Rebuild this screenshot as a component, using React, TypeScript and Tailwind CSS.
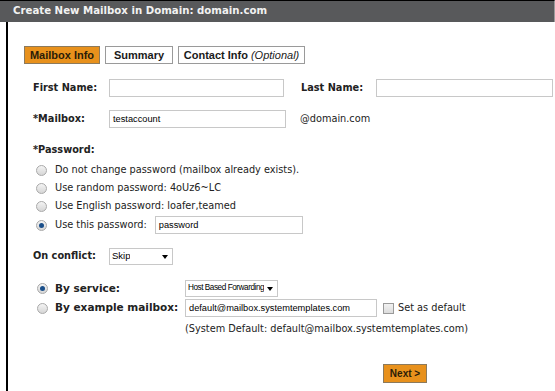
import { useState } from 'react';

const verdana = 'font-["DejaVu_Sans",Verdana,sans-serif]';
const arial = 'font-["Liberation_Sans",Arial,sans-serif]';

function Radio({ checked }: { checked?: boolean }) {
  return (
    <span className="w-[11px] h-[11px] rounded-full border border-[#a9a9a9] bg-gradient-to-b from-[#f4f4f4] to-[#d6d6d6] flex items-center justify-center shrink-0">
      {checked && <span className="w-[5px] h-[5px] rounded-full bg-[#1a4f8a]" />}
    </span>
  );
}

function TextBox({ w, value }: { w: string; value?: string }) {
  return (
    <div className={`${w} h-[18px] border border-[#c8c8c8] bg-white pl-[3px] text-[9.25px] leading-[16px] text-black whitespace-nowrap overflow-hidden ${arial}`}>
      {value}
    </div>
  );
}

function Select({ w, value, small }: { w: string; value: string; small?: boolean }) {
  return (
    <div className={`${w} h-[17px] border border-[#c8c8c8] bg-white pl-[2px] pr-[2px] flex items-center justify-between text-black whitespace-nowrap overflow-hidden ${small ? 'text-[8.2px] tracking-[-0.45px]' : 'text-[9.5px]'} ${arial}`}>
      <span className="leading-[14px] -mt-[2px] min-w-0 overflow-hidden">{value}</span>
      <span className="w-0 h-0 shrink-0 ml-[2px] mr-[2px] border-l-[3px] border-r-[3px] border-t-[4px] border-l-transparent border-r-transparent border-t-black" />
    </div>
  );
}

export default function App() {
  const [tab] = useState('mailbox');
  return (
    <div className={`w-[555px] h-[391px] bg-white overflow-hidden ${verdana}`}>
      <div className="h-[22px] bg-[#58595b] border-t border-black border-r border-r-[#9a9a9a] pl-[13px] text-[10.2px] font-bold text-[#f2f2f2] leading-[20px]">
        Create New Mailbox in Domain: domain.com
      </div>
      <div className="ml-[6px] border-l-2 border-black h-[369px] pt-[24px]">
        <div className={`flex gap-[5px] ml-[16px] ${arial} text-[11px] font-bold`}>
          {[
            { id: 'mailbox', label: 'Mailbox Info', w: 'w-[76px]' },
            { id: 'summary', label: 'Summary', w: 'w-[68px]' },
            { id: 'contact', label: 'Contact Info', w: 'w-[127px]', extra: '(Optional)' },
          ].map((t) => (
            <div
              key={t.id}
              className={`${t.w} h-[18px] border flex items-center justify-center gap-[3px] ${
                tab === t.id ? 'bg-[#e8911c] border-[#8c7a5c] text-[#2a1c08]' : 'bg-white border-[#9a9a9a] text-[#1a1a1a]'
              }`}
            >
              {t.label}
              {t.extra && <span className="italic font-normal">{t.extra}</span>}
            </div>
          ))}
        </div>

        <div className="mt-[15px] pl-[25px] text-[9.75px] text-[#222]">
          <div className="flex items-center h-[18px]">
            <span className="w-[76px] font-bold">First Name:</span>
            <TextBox w="w-[175px]" />
            <span className="w-[75px] ml-[17px] font-bold">Last Name:</span>
            <TextBox w="w-[177px]" />
          </div>

          <div className="flex items-center h-[18px] mt-[13px]">
            <span className="w-[76px] font-bold">*Mailbox:</span>
            <TextBox w="w-[177px]" value="testaccount" />
            <span className="ml-[14px]">@domain.com</span>
          </div>

          <div className="font-bold mt-[15px] h-[14px] leading-[14px]">*Password:</div>
          <div className="flex flex-col mt-[4px]">
            {[
              'Do not change password (mailbox already exists).',
              'Use random password: 4oUz6~LC',
              'Use English password: loafer,teamed',
            ].map((t) => (
              <div key={t} className="flex items-center h-[18px] pl-[3px] gap-[8px]">
                <Radio />
                <span>{t}</span>
              </div>
            ))}
            <div className="flex items-center h-[18px] pl-[3px] gap-[8px] mt-[1px]">
              <Radio checked />
              <span>Use this password:</span>
              <TextBox w="w-[148px]" value="password" />
            </div>
          </div>

          <div className="flex items-center h-[17px] mt-[14px]">
            <span className="w-[76px] font-bold">On conflict:</span>
            <Select w="w-[64px]" value="Skip" />
          </div>

          <div className="flex items-center h-[17px] mt-[15px] pl-[4px]">
            <Radio checked />
            <span className="ml-[7px] w-[130px] font-bold text-[10.5px]">By service:</span>
            <Select w="w-[93px]" value="Host Based Forwarding" small />
          </div>
          <div className="flex items-center h-[18px] mt-[2px] pl-[4px]">
            <Radio />
            <span className="ml-[7px] w-[130px] font-bold text-[10.5px]">By example mailbox:</span>
            <TextBox w="w-[192px]" value="default@mailbox.systemtemplates.com" />
            <span className="w-[11px] h-[11px] ml-[6px] border border-[#9a9a9a] bg-gradient-to-b from-[#f2f2f2] to-[#dcdcdc]" />
            <span className="ml-[4px]">Set as default</span>
          </div>
          <div className="mt-[5px] ml-[152px] h-[14px] leading-[14px]">(System Default: default@mailbox.systemtemplates.com)</div>

          <div className="flex mt-[28px] ml-[350px]">
            <div className={`w-[44px] h-[19px] bg-[#e8911c] border border-[#8c7a5c] flex items-center justify-center text-[10px] font-bold text-[#2a1c08] ${arial}`}>
              Next &gt;
            </div>
          </div>
        </div>
      </div>
    </div>
  );
}
